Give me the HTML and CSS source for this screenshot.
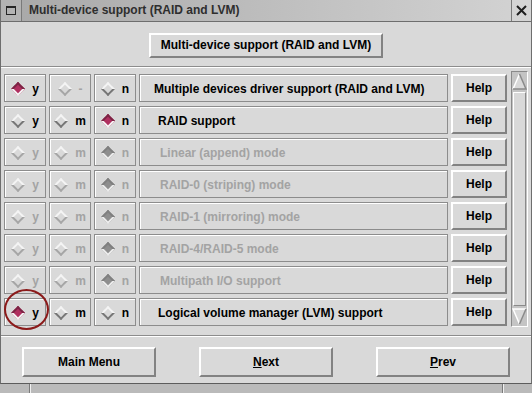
FILE: index.html
```html
<!DOCTYPE html>
<html>
<head>
<meta charset="utf-8">
<link rel="stylesheet" href="styles.css">
</head>
<body>
<div class="window">
  <div class="frame">
    <div class="titlebar">
      <div class="tb-icon"><span class="winicon"></span></div>
      <div class="tb-title">Multi-device support (RAID and LVM)</div>
      <div class="tb-close"><svg width="11" height="11" viewBox="0 0 11 11"><path d="M1 1 L10 10 M10 1 L1 10" stroke="#1e1e1e" stroke-width="2"/></svg></div>
    </div>
    <div class="body">
      <div class="top"><div class="btn btn-top">Multi-device support (RAID and LVM)</div></div>
      <div class="sep"></div>
      <div class="list">
        <div class="rows">
          <div class="row">
            <div class="cell"><span class="dia on"></span><span>y</span></div>
            <div class="cell off"><span class="dia"></span><span>-</span></div>
            <div class="cell"><span class="dia"></span><span>n</span></div>
            <div class="label wide">Multiple devices driver support (RAID and LVM)</div>
            <div class="btn help">Help</div>
          </div>
          <div class="row">
            <div class="cell"><span class="dia"></span><span>y</span></div>
            <div class="cell"><span class="dia"></span><span>m</span></div>
            <div class="cell"><span class="dia on"></span><span>n</span></div>
            <div class="label">RAID support</div>
            <div class="btn help">Help</div>
          </div>
          <div class="row">
            <div class="cell off"><span class="dia"></span><span>y</span></div>
            <div class="cell off"><span class="dia"></span><span>m</span></div>
            <div class="cell off"><span class="dia on"></span><span>n</span></div>
            <div class="label off">Linear (append) mode</div>
            <div class="btn help">Help</div>
          </div>
          <div class="row">
            <div class="cell off"><span class="dia"></span><span>y</span></div>
            <div class="cell off"><span class="dia"></span><span>m</span></div>
            <div class="cell off"><span class="dia on"></span><span>n</span></div>
            <div class="label off">RAID-0 (striping) mode</div>
            <div class="btn help">Help</div>
          </div>
          <div class="row">
            <div class="cell off"><span class="dia"></span><span>y</span></div>
            <div class="cell off"><span class="dia"></span><span>m</span></div>
            <div class="cell off"><span class="dia on"></span><span>n</span></div>
            <div class="label off">RAID-1 (mirroring) mode</div>
            <div class="btn help">Help</div>
          </div>
          <div class="row">
            <div class="cell off"><span class="dia"></span><span>y</span></div>
            <div class="cell off"><span class="dia"></span><span>m</span></div>
            <div class="cell off"><span class="dia on"></span><span>n</span></div>
            <div class="label off">RAID-4/RAID-5 mode</div>
            <div class="btn help">Help</div>
          </div>
          <div class="row">
            <div class="cell off"><span class="dia"></span><span>y</span></div>
            <div class="cell off"><span class="dia"></span><span>m</span></div>
            <div class="cell off"><span class="dia on"></span><span>n</span></div>
            <div class="label off">Multipath I/O support</div>
            <div class="btn help">Help</div>
          </div>
          <div class="row">
            <div class="cell"><span class="dia on"></span><span>y</span></div>
            <div class="cell"><span class="dia"></span><span>m</span></div>
            <div class="cell"><span class="dia"></span><span>n</span></div>
            <div class="label">Logical volume manager (LVM) support</div>
            <div class="btn help">Help</div>
          </div>
        </div>
        <div class="scrollbar">
          <svg class="arrow" width="15" height="17" viewBox="0 0 15 17">
            <polygon points="7.5,1 14,16 1,16" fill="#d9d9d9"/>
            <path d="M1 16 L7.5 1" stroke="#ffffff" stroke-width="1.5" fill="none"/>
            <path d="M7.5 1 L14 16 L1 16" stroke="#8a8a8a" stroke-width="1.5" fill="none"/>
          </svg>
          <div class="thumb"></div>
          <svg class="arrow" width="15" height="17" viewBox="0 0 15 17">
            <polygon points="1,1 14,1 7.5,16" fill="#d9d9d9"/>
            <path d="M7.5 16 L1 1 L14 1" stroke="#ffffff" stroke-width="1.5" fill="none"/>
            <path d="M14 1 L7.5 16" stroke="#8a8a8a" stroke-width="1.5" fill="none"/>
          </svg>
        </div>
      </div>
      <div class="sep"></div>
      <div class="actions">
        <div class="btn act">Main Menu</div>
        <div class="btn act"><span><u>N</u>ext</span></div>
        <div class="btn act"><span><u>P</u>rev</span></div>
      </div>
    </div>
  </div>
  <div class="strip"><span class="seg seg-a"></span><span class="seg seg-b"></span><span class="seg seg-c"></span></div>
  <div class="annot"></div>
</div>
</body>
</html>
```

FILE: styles.css
```css
* { box-sizing: border-box; }
html, body { margin: 0; padding: 0; }
body {
  width: 532px;
  height: 393px;
  overflow: hidden;
  background: #d9d9d9;
  font: bold 12px "Liberation Sans", Arial, sans-serif;
  color: #000;
}
.window {
  position: relative;
  width: 532px;
  height: 393px;
  display: flex;
  flex-direction: column;
}
.frame {
  height: 384px;
  display: flex;
  flex-direction: column;
  border-left: 1px solid #6e6e6e;
  border-right: 1px solid #6e6e6e;
  border-bottom: 1px solid #5c5c5c;
}
.titlebar {
  height: 22px;
  display: flex;
  border-bottom: 1px solid #6e6e6e;
  background: linear-gradient(to right, #a8a8a8, #d3d3d3);
}
.tb-icon {
  width: 21px;
  border-right: 1px solid #7a7a7a;
  display: flex;
  align-items: center;
  justify-content: center;
  background: #b3b3b3;
}
.winicon {
  width: 10px;
  height: 9px;
  border: 1px solid #262626;
  border-top-width: 2px;
}
.tb-title {
  flex: 1;
  padding-left: 7px;
  line-height: 21px;
  color: #2e2e2e;
  white-space: nowrap;
}
.tb-close {
  width: 20px;
  border-left: 1px solid #7a7a7a;
  display: flex;
  align-items: center;
  justify-content: center;
  background: #d4d4d4;
}
.body {
  flex: 1;
  display: flex;
  flex-direction: column;
  padding: 11px 3px 10px 3px;
}
.top { display: flex; justify-content: center; }
.btn {
  display: flex;
  align-items: center;
  justify-content: center;
  background: #d9d9d9;
  border: 2px solid;
  border-color: #ffffff #828282 #828282 #ffffff;
  white-space: nowrap;
}
.btn-top { width: 234px; height: 25px; padding-bottom: 2px; }
.sep {
  height: 2px;
  margin: 8px -3px 0 -3px;
  border-top: 1px solid #8c8c8c;
  border-bottom: 1px solid #ffffff;
}
.list {
  display: flex;
  gap: 4px;
  margin-top: 3px;
  height: 256px;
}
.rows {
  display: grid;
  grid-template-columns: 42px 42px 42px 309px 56px;
  grid-auto-rows: 28px;
  column-gap: 3px;
  row-gap: 4px;
  padding-top: 3px;
  align-content: start;
}
.row { display: contents; }
.cell, .label {
  border: 1px solid #8c8c8c;
  box-shadow: inset 1px 1px 0 #ffffff;
  background: #d9d9d9;
}
.cell {
  display: flex;
  align-items: center;
  justify-content: center;
  gap: 7px;
  padding-top: 1px;
}
.cell.off { color: #a3a3a3; }
.dia {
  width: 10px;
  height: 10px;
  margin: 2px;
  transform: rotate(45deg);
  border: 2px solid;
  border-color: #f4f4f4 #767676 #767676 #f4f4f4;
  background: #d9d9d9;
}
.dia.on {
  background: #b03060;
  border-color: #7c2545 #f4f4f4 #f4f4f4 #7c2545;
}
.cell.off .dia {
  border-color: #f4f4f4 #a6a6a6 #a6a6a6 #f4f4f4;
}
.cell.off .dia.on {
  background: #8e8e8e;
  border-color: #808080 #ececec #ececec #808080;
}
.label {
  display: flex;
  align-items: center;
  padding-left: 18px;
  padding-top: 1px;
  white-space: nowrap;
  overflow: hidden;
}
.label.wide { padding-left: 14px; }
.label.off { color: #a3a3a3; padding-left: 20px; }
.help { padding-bottom: 1px; }
.scrollbar {
  width: 17px;
  height: 256px;
  display: flex;
  flex-direction: column;
  align-items: center;
  border: 1px solid;
  border-color: #8a8a8a #ffffff #ffffff #8a8a8a;
  background: #c4c4c4;
  padding: 1px 0;
}
.arrow { display: block; flex: none; }
.thumb {
  flex: 1;
  width: 13px;
  margin: 2px 0;
  background: #d9d9d9;
  border: 1px solid;
  border-color: #ffffff #8a8a8a #8a8a8a #ffffff;
}
.actions {
  display: flex;
  justify-content: space-between;
  margin-top: 10px;
  padding: 0 18px;
}
.act { width: 134px; height: 30px; padding-bottom: 1px; }
.strip {
  height: 9px;
  display: flex;
  background: #bababa;
}
.seg { display: block; height: 9px; }
.seg-a { width: 30px; border-right: 1px solid #7a7a7a; }
.seg-b { flex: 1; border-left: 1px solid #f0f0f0; border-right: 1px solid #7a7a7a; }
.seg-c { width: 29px; border-left: 1px solid #f0f0f0; }
.annot {
  position: absolute;
  left: 4px;
  top: 289px;
  width: 45px;
  height: 41px;
  border: 2px solid #8b1a1a;
  border-radius: 50%;
}
```
